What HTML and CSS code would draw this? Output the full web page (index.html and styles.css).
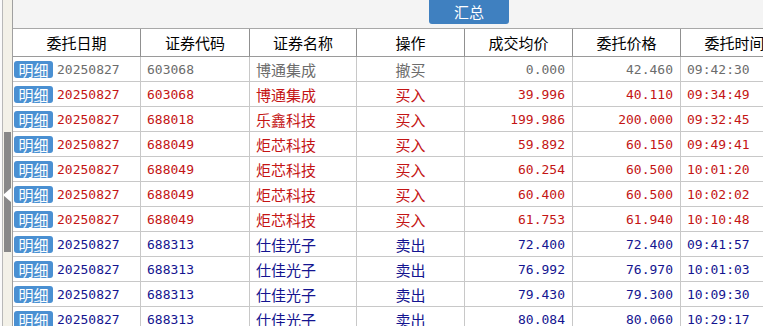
FILE: index.html
```html
<!DOCTYPE html>
<html>
<head>
<meta charset="utf-8">
<link rel="stylesheet" href="styles.css">
</head>
<body>
<div class="app">
  <div class="strip">
    <div class="strip-inner">
      <div class="handle"><span class="arrow"></span></div>
    </div>
  </div>
  <div class="main">
    <div class="toolbar"><button class="btn">汇总</button></div>
    <div class="row head">
      <div class="c">委托日期</div>
      <div class="c">证券代码</div>
      <div class="c">证券名称</div>
      <div class="c">操作</div>
      <div class="c">成交均价</div>
      <div class="c">委托价格</div>
      <div class="c">委托时间</div>
    </div>
    <div class="row gray">
      <div class="c date"><span class="badge">明细</span><span class="num">20250827</span></div>
      <div class="c num left">603068</div><div class="c cn left">博通集成</div><div class="c cn mid">撤买</div>
      <div class="c num right">0.000</div><div class="c num right">42.460</div><div class="c num left">09:42:30</div>
    </div>
    <div class="row red">
      <div class="c date"><span class="badge">明细</span><span class="num">20250827</span></div>
      <div class="c num left">603068</div><div class="c cn left">博通集成</div><div class="c cn mid">买入</div>
      <div class="c num right">39.996</div><div class="c num right">40.110</div><div class="c num left">09:34:49</div>
    </div>
    <div class="row red">
      <div class="c date"><span class="badge">明细</span><span class="num">20250827</span></div>
      <div class="c num left">688018</div><div class="c cn left">乐鑫科技</div><div class="c cn mid">买入</div>
      <div class="c num right">199.986</div><div class="c num right">200.000</div><div class="c num left">09:32:45</div>
    </div>
    <div class="row red">
      <div class="c date"><span class="badge">明细</span><span class="num">20250827</span></div>
      <div class="c num left">688049</div><div class="c cn left">炬芯科技</div><div class="c cn mid">买入</div>
      <div class="c num right">59.892</div><div class="c num right">60.150</div><div class="c num left">09:49:41</div>
    </div>
    <div class="row red">
      <div class="c date"><span class="badge">明细</span><span class="num">20250827</span></div>
      <div class="c num left">688049</div><div class="c cn left">炬芯科技</div><div class="c cn mid">买入</div>
      <div class="c num right">60.254</div><div class="c num right">60.500</div><div class="c num left">10:01:20</div>
    </div>
    <div class="row red">
      <div class="c date"><span class="badge">明细</span><span class="num">20250827</span></div>
      <div class="c num left">688049</div><div class="c cn left">炬芯科技</div><div class="c cn mid">买入</div>
      <div class="c num right">60.400</div><div class="c num right">60.500</div><div class="c num left">10:02:02</div>
    </div>
    <div class="row red">
      <div class="c date"><span class="badge">明细</span><span class="num">20250827</span></div>
      <div class="c num left">688049</div><div class="c cn left">炬芯科技</div><div class="c cn mid">买入</div>
      <div class="c num right">61.753</div><div class="c num right">61.940</div><div class="c num left">10:10:48</div>
    </div>
    <div class="row blue">
      <div class="c date"><span class="badge">明细</span><span class="num">20250827</span></div>
      <div class="c num left">688313</div><div class="c cn left">仕佳光子</div><div class="c cn mid">卖出</div>
      <div class="c num right">72.400</div><div class="c num right">72.400</div><div class="c num left">09:41:57</div>
    </div>
    <div class="row blue">
      <div class="c date"><span class="badge">明细</span><span class="num">20250827</span></div>
      <div class="c num left">688313</div><div class="c cn left">仕佳光子</div><div class="c cn mid">卖出</div>
      <div class="c num right">76.992</div><div class="c num right">76.970</div><div class="c num left">10:01:03</div>
    </div>
    <div class="row blue">
      <div class="c date"><span class="badge">明细</span><span class="num">20250827</span></div>
      <div class="c num left">688313</div><div class="c cn left">仕佳光子</div><div class="c cn mid">卖出</div>
      <div class="c num right">79.430</div><div class="c num right">79.300</div><div class="c num left">10:09:30</div>
    </div>
    <div class="row blue">
      <div class="c date"><span class="badge">明细</span><span class="num">20250827</span></div>
      <div class="c num left">688313</div><div class="c cn left">仕佳光子</div><div class="c cn mid">卖出</div>
      <div class="c num right">80.084</div><div class="c num right">80.060</div><div class="c num left">10:29:17</div>
    </div>
  </div>
</div>
</body>
</html>
```
FILE: styles.css
```css
html, body {
  margin: 0;
  padding: 0;
  background: #ffffff;
  overflow: hidden;
  width: 763px;
  height: 326px;
}
.app {
  display: flex;
  width: 763px;
  height: 326px;
  font-family: "Noto Sans CJK SC", sans-serif;
}
.strip {
  width: 13px;
  flex: none;
  box-sizing: border-box;
  padding-left: 2px;
  background: #fafafa;
  display: flex;
}
.strip-inner {
  flex: 1;
  background: #f3f1e8;
  border-left: 1px solid #b8b8b8;
  border-right: 1px solid #a0a0a0;
}
.handle {
  position: relative;
  margin: 132px 1px 0 1px;
  height: 120px;
  background: #888888;
}
.arrow {
  position: absolute;
  left: -1px;
  top: 56px;
  width: 0;
  height: 0;
  border-top: 7px solid transparent;
  border-bottom: 7px solid transparent;
  border-right: 8px solid #ffffff;
}
.main {
  flex: 1;
  overflow: hidden;
  display: flex;
  flex-direction: column;
}
.toolbar {
  height: 28px;
  flex: none;
  background: #f4f4f4;
  border-bottom: 1px solid #a8a8a8;
  display: flex;
  align-items: flex-start;
  padding-left: 416px;
}
.btn {
  width: 80px;
  height: 24px;
  margin: 0;
  padding: 0;
  border: none;
  border-radius: 0 0 3px 3px;
  background: #3f80c0;
  color: #ffffff;
  font-family: "Noto Sans CJK SC", sans-serif;
  font-size: 15px;
  line-height: 22px;
}
.row {
  display: grid;
  grid-template-columns: 128px 109px 107px 108px 108px 108px 108px;
  height: 25px;
  flex: none;
}
.c {
  box-sizing: border-box;
  border-right: 1px solid #c8c8c8;
  border-bottom: 1px solid #c8c8c8;
  display: flex;
  align-items: center;
  white-space: nowrap;
  overflow: hidden;
}
.head {
  height: 28px;
}
.head .c {
  justify-content: center;
  color: #000000;
  font-size: 15px;
  border-right-color: #909090;
  border-bottom-color: #9a9a9a;
}
.num {
  font-family: "DejaVu Sans Mono", monospace;
  font-size: 13px;
}
.cn {
  font-size: 15px;
}
.left {
  justify-content: flex-start;
  padding-left: 6px;
}
.mid {
  justify-content: center;
}
.right {
  justify-content: flex-end;
  padding-right: 7px;
}
.date {
  padding-left: 1px;
  gap: 4px;
}
.badge {
  display: inline-flex;
  align-items: center;
  justify-content: center;
  width: 39px;
  height: 17px;
  border-radius: 3px;
  background: #4a90d2;
  color: #ffffff;
  font-size: 15px;
  line-height: 17px;
}
.gray { color: #6c6c6c; }
.red { color: #c41414; }
.blue { color: #141490; }
```
